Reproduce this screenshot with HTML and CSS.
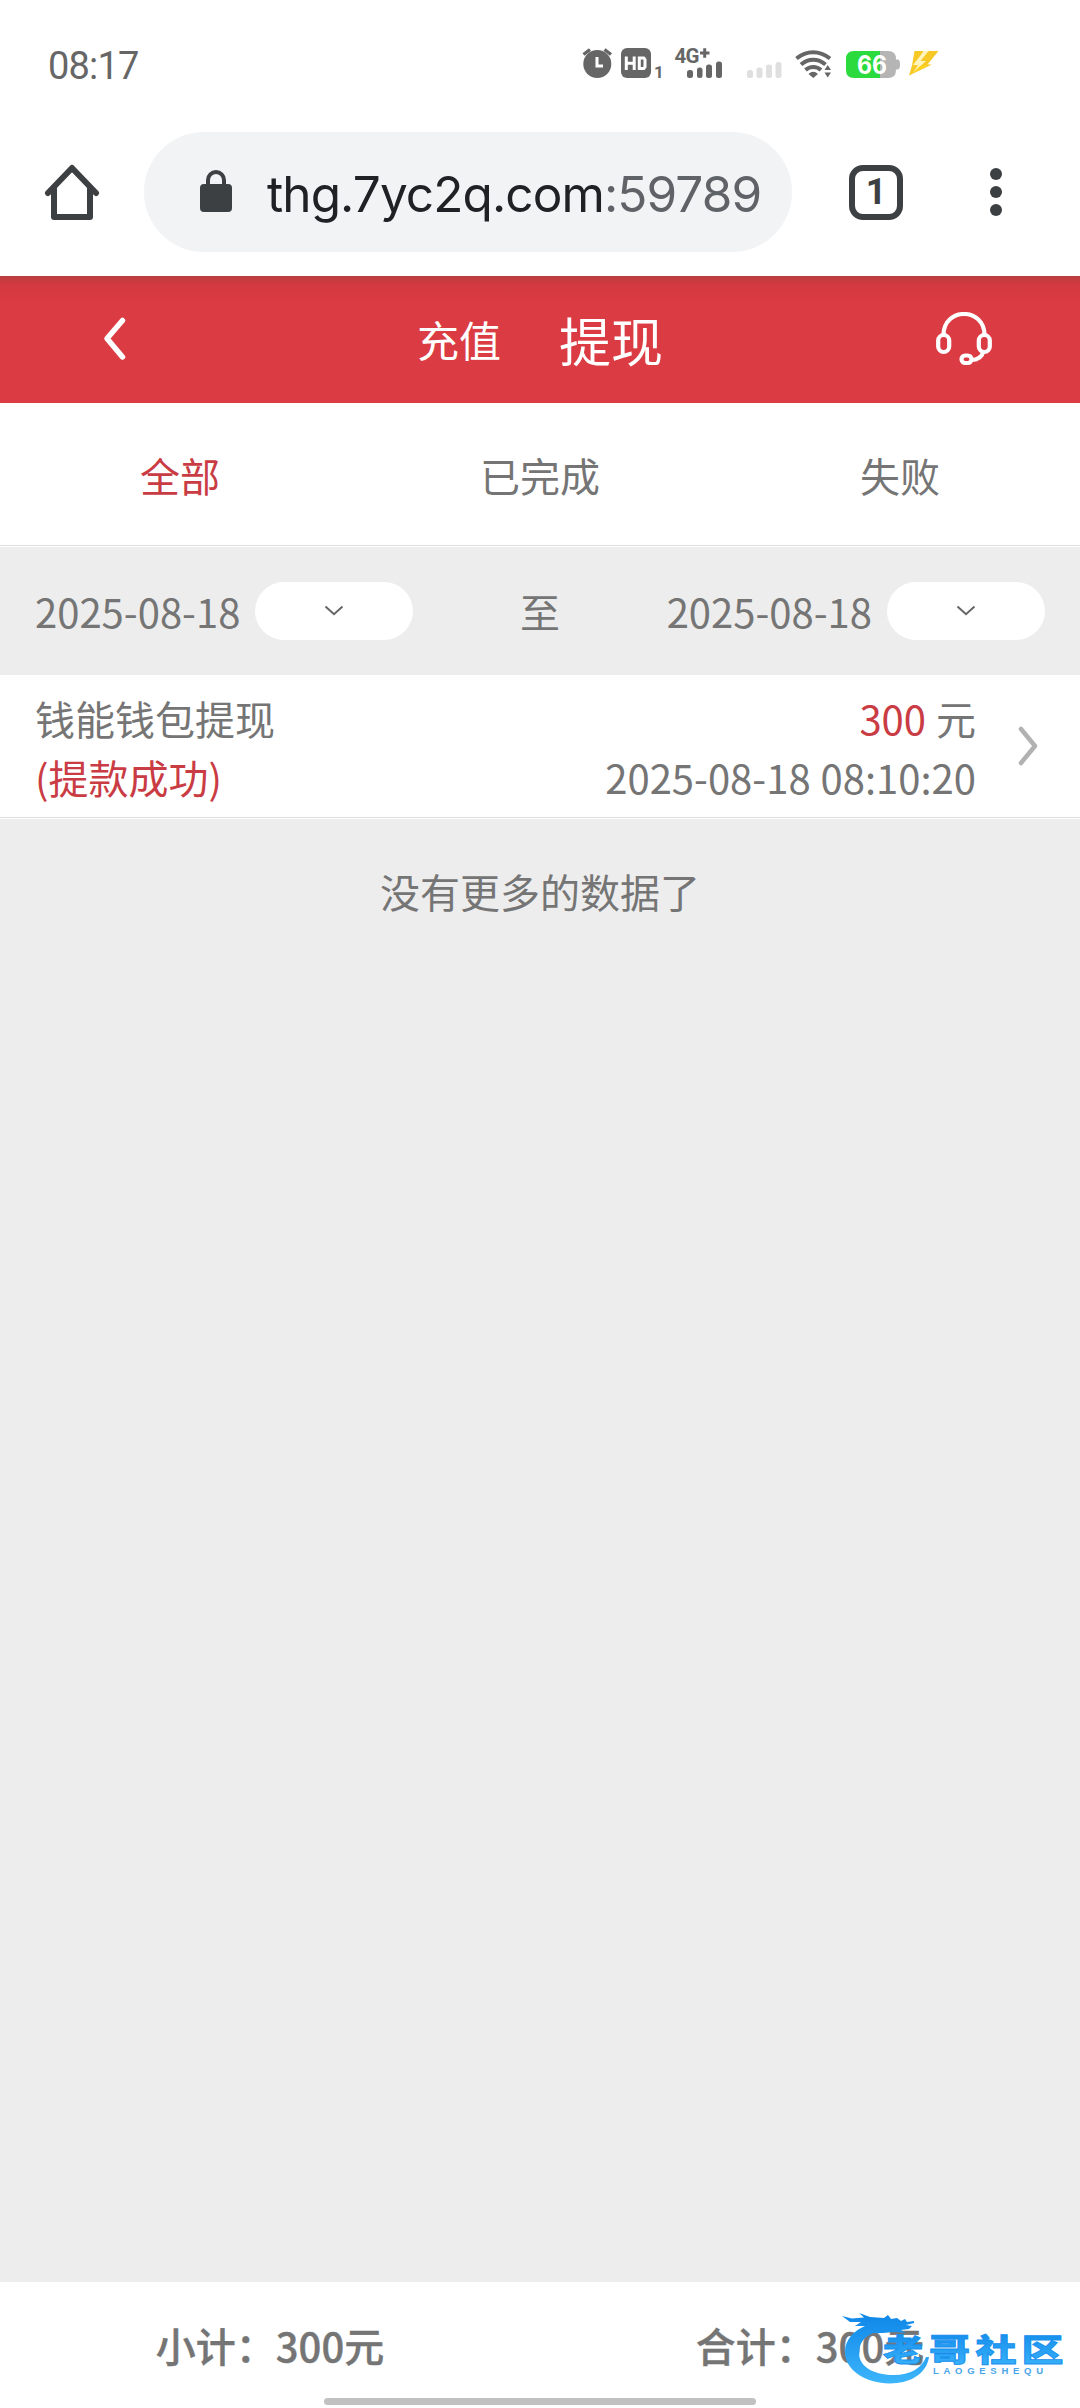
FILE: index.html
```html
<!DOCTYPE html>
<html lang="zh-CN">
<head>
<meta charset="utf-8">
<title>提现</title>
<link rel="stylesheet" href="styles.css">
</head>
<body>
<div class="screen">
  <div class="status">
    <span class="clock">08:17</span>
    <svg class="status-icons" width="360" height="40" viewBox="580 44 360 40">
      <g fill="#666">
        <circle cx="597.3" cy="64" r="14"/>
        <path d="M583.5 54.500l6.500-5M611 54.500l-6.500-5" stroke="#666" stroke-width="3.400"/>
        <rect x="621" y="48" width="30" height="30" rx="6"/>
        <text class="glyph" x="654" y="77.500" font-size="17">1</text>
        <text class="glyph" x="674.500" y="62.700" font-size="20.500" textLength="25">4G</text>
        <path d="M700 53h9.500M704.700 48.200v9.600" stroke="#666" stroke-width="3"/>
        <rect x="687" y="70" width="6" height="8" rx="2.500"/>
        <rect x="697" y="67.500" width="5.500" height="10.500" rx="2.500"/>
        <rect x="706" y="64.500" width="6" height="13.500" rx="2.500"/>
        <rect x="716" y="61.500" width="6" height="16.500" rx="2.500"/>
      </g>
      <path d="M597 57v9h6" fill="none" stroke="#fff" stroke-width="3"/>
      <path d="M626.300 56.500v13.500M634.200 56.500v13.500M626.300 63.300h8M639.300 58v10.500h4.500l1.200-1.500v-7.500l-1.200-1.500z" fill="none" stroke="#fff" stroke-width="3"/>
      <g fill="#dfdfdf">
        <rect x="747" y="70" width="6" height="8" rx="2.500"/>
        <rect x="756.500" y="67.500" width="6" height="10.500" rx="2.500"/>
        <rect x="766" y="64.500" width="6" height="13.500" rx="2.500"/>
        <rect x="775.500" y="62" width="6" height="16" rx="2.500"/>
      </g>
      <g fill="none" stroke="#666" stroke-width="4">
        <path d="M796.500 58.500c10-8.500 23-8.500 33.500 0"/>
        <path d="M801 64.500c7.500-6.500 17-6.500 24.500 0"/>
        <path d="M805.500 70c4.500-4 11-4 15.500 0"/>
      </g>
      <path d="M808.500 74q4.800-4.500 9.500 0l-4.700 4zM824.500 70l3.200-5 3.300 5zM824.500 72.500h6.500l-3.300 5z" fill="#666"/>
      <path d="M854 51h34q8 0 8 8v0.500h1.500q2.500 0 2.500 5t-2.500 5h-1.500v0.500q0 8-8 8h-34z" fill="#b5b5b5"/>
      <path d="M880 51v27h-26q-8 0-8-8v-11q0-8 8-8z" fill="#2bdb3e"/>
      <text class="battery" x="857" y="73.800" font-size="25" textLength="30" lengthAdjust="spacingAndGlyphs">66</text>
      <path d="M914.500 51h9l-5 10 10-10h10l-11 13.500h4.500l-23 11 3-10z" fill="#f6c927"/>
      <path d="M924 51l-11 14h5l-5 8 13-12h-5.500l8-10z" fill="#fff4bd"/>
      <path d="M913 73l7-7 10-1.500z" fill="#ffd21d"/>
    </svg>
  </div>

  <div class="browser-bar">
    <svg class="home" width="56" height="58" viewBox="0 0 56 58" fill="none" stroke="#3c4043" stroke-width="6" stroke-linejoin="round" stroke-linecap="round">
      <path d="M4 30L28 5l24 25"/><path d="M10 26v28h36v-28"/>
    </svg>
    <div class="address">
      <svg width="32" height="42" viewBox="0 0 32 42">
        <rect y="14" width="32" height="28" rx="4" fill="#3c4043"/>
        <path d="M8 16v-6a8 8 0 0 1 16 0v6" fill="none" stroke="#3c4043" stroke-width="4"/>
      </svg>
      <span class="url">thg.7yc2q.com<span class="port">:59789</span></span>
    </div>
    <span class="tab-count">1</span>
    <svg class="menu" width="12" height="50" viewBox="0 0 12 50" fill="#3c4043">
      <circle cx="6" cy="7" r="6"/><circle cx="6" cy="25" r="6"/><circle cx="6" cy="43" r="6"/>
    </svg>
  </div>

  <header class="header">
    <svg class="back" width="24" height="46" viewBox="0 0 24 46" fill="none" stroke="#fff" stroke-width="5.500" stroke-linecap="round" stroke-linejoin="round">
      <path d="M19.500 4.500L4 22.500l15.500 18.500"/>
    </svg>
    <nav class="switch">
      <span class="recharge">充值</span>
      <span class="withdraw">提现</span>
    </nav>
    <svg class="service" width="56" height="54" viewBox="0 0 56 54" fill="none" stroke="#fff" stroke-width="4.200">
      <path d="M7.500 23c0-28 41-28 41 0"/>
      <rect x="2.200" y="23" width="11" height="17" rx="5.500"/>
      <rect x="42.800" y="23" width="11" height="17" rx="5.500"/>
      <rect x="25.500" y="43.500" width="10" height="7.500" rx="3.700"/>
      <path d="M35 48c7 0 11-2.500 12.500-9"/>
    </svg>
  </header>

  <nav class="tabs">
    <span class="tab active">全部</span>
    <span class="tab">已完成</span>
    <span class="tab">失败</span>
  </nav>

  <div class="filter">
    <div class="date"><span>2025-08-18</span>
      <span class="picker"><svg width="20" height="12" viewBox="0 0 20 12"><path d="M1.500 1.500L10 9.200l8.500-7.700"/></svg></span></div>
    <span>至</span>
    <div class="date"><span>2025-08-18</span>
      <span class="picker"><svg width="20" height="12" viewBox="0 0 20 12"><path d="M1.500 1.500L10 9.200l8.500-7.700"/></svg></span></div>
  </div>

  <div class="record">
    <div class="record-type"><div>钱能钱包提现</div><div class="red">(提款成功)</div></div>
    <div class="record-info"><div><span class="red">300</span> 元</div><div>2025-08-18 08:10:20</div></div>
    <svg class="more" width="22" height="42" viewBox="0 0 22 42"><path d="M4 4l14 17L4 38"/></svg>
  </div>

  <main class="list-end">没有更多的数据了</main>

  <footer class="totals">
    <span>小计：300元</span>
    <span>合计：300元</span>
    <i class="gesture"></i>
  </footer>

  <svg class="watermark" width="240" height="84" viewBox="840 2308 240 84">
    <defs>
      <linearGradient id="blue" x1="0" y1="0" x2="0" y2="1">
        <stop offset="0" stop-color="#0d86e8"/><stop offset="1" stop-color="#3db5fb"/>
      </linearGradient>
    </defs>
    <path fill="url(#blue)" d="M842 2316l10 2.500 12-1-5-4.500 11 4 14 1 4-3 3 4 6-1 4 3 4-2 2 3 7-1 0 2-8 2 6 1-3 3-8 1 5 3-12-1-11 1-10 0c-10 4-14 12-14 20 0 15 17 22 35 22 16 0 28-7 32-18l3 0c-2 14-14 24-32 26-27 3-52-11-52-31 0-13 9-21 20-26l-10 0 6-4-11 0z"/>
    <g class="mark" fill="url(#blue)">
      <text x="883" y="2361" font-size="31" textLength="40" lengthAdjust="spacingAndGlyphs">老</text>
      <text x="929" y="2361" font-size="31" textLength="41" lengthAdjust="spacingAndGlyphs">哥</text>
      <text x="975.500" y="2361" font-size="31" textLength="41" lengthAdjust="spacingAndGlyphs">社</text>
      <text x="1021.500" y="2361" font-size="31" textLength="42" lengthAdjust="spacingAndGlyphs">区</text>
    </g>
    <text class="mark-sub" x="933" y="2374" font-size="9.500" textLength="110" fill="#4ba6ea">LAOGESHEQU</text>
  </svg>
</div>
</body>
</html>
```
FILE: styles.css
```css
* { box-sizing: border-box; }
body {
  margin: 0;
  background: #fff;
  color: #757575;
  font: 40px/58px "Noto Sans CJK SC", sans-serif;
}
svg { display: block; flex: none; }
.screen {
  position: relative;
  display: flex;
  flex-direction: column;
  width: 1080px;
  height: 2408px;
  overflow: hidden;
}
.red { color: #ca3c44; }

.status {
  display: flex;
  justify-content: space-between;
  height: 108px;
  padding: 44px 140px 0 48px;
}
.clock {
  padding-top: 1px;
  color: #666;
  font: 38px/42px Roboto, sans-serif;
  letter-spacing: -0.8px;
}
.glyph { font-family: Roboto, sans-serif; font-weight: 700; }
.battery { font-family: Inter, sans-serif; font-weight: 700; fill: #fff; }

.browser-bar {
  display: flex;
  align-items: center;
  height: 168px;
  padding: 0 78px 0 44px;
}
.address {
  display: flex;
  align-items: center;
  width: 648px;
  height: 120px;
  margin-left: 44px;
  padding: 0 20px 2px 56px;
  border-radius: 60px;
  background: #f1f3f4;
}
.url {
  margin-left: 35px;
  padding-top: 6px;
  color: #202124;
  font: 49.5px/60px Inter, sans-serif;
  letter-spacing: -0.9px;
  white-space: nowrap;
}
.port { color: #5f6368; }
.tab-count {
  width: 54px;
  height: 55px;
  margin-left: 57px;
  border: 6px solid #3c4043;
  border-radius: 14px;
  color: #3c4043;
  font: 700 36px/43px Roboto, sans-serif;
  text-align: center;
}
.menu { margin-left: auto; }

.header {
  display: flex;
  align-items: center;
  justify-content: space-between;
  height: 127px;
  padding: 0 88px 0 103px;
  background: linear-gradient(#b93d3f 0, #d23a3f 8px, #db3b42 26px);
  color: #fff;
}
.back, .service { margin-bottom: 2px; }
.switch { display: flex; align-items: center; margin-left: 17px; gap: 58px; }
.recharge { padding-bottom: 2px; font-size: 42px; }
.withdraw { font-size: 52px; }

.tabs {
  display: grid;
  grid-template-columns: repeat(3, 1fr);
  align-items: center;
  height: 143px;
  padding-top: 1px;
  border-bottom: 1px solid #dedede;
  text-align: center;
}
.tab.active { color: #ca3c44; }

.filter {
  display: flex;
  align-items: center;
  justify-content: space-between;
  height: 129px;
  padding: 0 35px;
  border-top: 1px solid #fff;
  background: #ededed;
}
.date { display: flex; align-items: center; gap: 15px; }
.picker {
  display: flex;
  align-items: center;
  justify-content: center;
  width: 158px;
  height: 58px;
  border-radius: 29px;
  background: #fff;
}
.picker path { fill: none; stroke: #666; stroke-width: 2; }

.record {
  display: flex;
  justify-content: space-between;
  height: 143px;
  padding: 14px 41px 0 35px;
  border-bottom: 1px solid #dedede;
  line-height: 59px;
}
.record-info { margin-left: auto; text-align: right; word-spacing: 1px; }
.more { margin: 36px 0 0 41px; }
.more path {
  fill: none;
  stroke: #b2b2b2;
  stroke-width: 4.5;
  stroke-linecap: round;
  stroke-linejoin: round;
}

.list-end {
  flex: 1;
  padding-top: 43px;
  border-top: 1px solid #fff;
  background: #ededed;
  text-align: center;
}

.totals {
  position: relative;
  display: grid;
  grid-template-columns: 1fr 1fr;
  align-items: center;
  height: 126px;
  background: #fff;
  font-weight: 500;
  -webkit-text-stroke: 0.4px #757575;
  text-align: center;
}
.gesture {
  position: absolute;
  left: 324px;
  bottom: 3px;
  width: 432px;
  height: 7px;
  border-radius: 4px;
  background: #c1c1c1;
}
.watermark { position: absolute; left: 840px; top: 2308px; }
.mark { font-family: "Noto Sans CJK SC", sans-serif; font-weight: 900; stroke: #168fee; stroke-width: 0.8; }
.mark-sub { font-family: "Liberation Sans", sans-serif; font-weight: 700; }
```
